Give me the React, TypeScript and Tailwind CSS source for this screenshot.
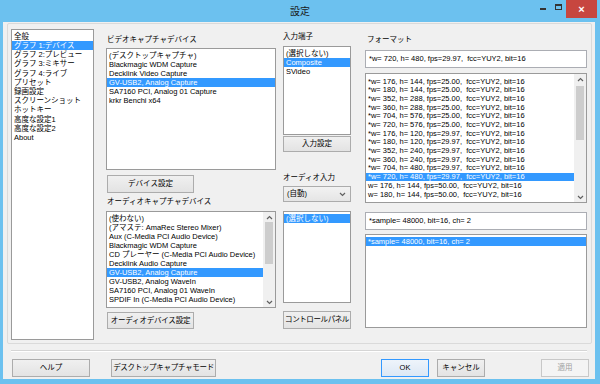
import React from "react";

const navItems = [
  "全般",
  "グラフ 1:デバイス",
  "グラフ 2:プレビュー",
  "グラフ 3:ミキサー",
  "グラフ 4:ライブ",
  "プリセット",
  "録画設定",
  "スクリーンショット",
  "ホットキー",
  "高度な設定1",
  "高度な設定2",
  "About",
];

const videoDevices = [
  "(デスクトップキャプチャ)",
  "Blackmagic WDM Capture",
  "Decklink Video Capture",
  "GV-USB2, Analog Capture",
  "SA7160 PCI, Analog 01 Capture",
  "krkr Benchi x64",
];

const audioDevices = [
  "(使わない)",
  "(アマステ: AmaRec Stereo Mixer)",
  "Aux (C-Media PCI Audio Device)",
  "Blackmagic WDM Capture",
  "CD プレーヤー (C-Media PCI Audio Device)",
  "Decklink Audio Capture",
  "GV-USB2, Analog Capture",
  "GV-USB2, Analog WaveIn",
  "SA7160 PCI, Analog 01 WaveIn",
  "SPDIF In (C-Media PCI Audio Device)",
];

const formats = [
  "*w= 176, h= 144, fps=25.00,  fcc=YUY2, bit=16",
  "*w= 180, h= 144, fps=25.00,  fcc=YUY2, bit=16",
  "*w= 352, h= 288, fps=25.00,  fcc=YUY2, bit=16",
  "*w= 360, h= 288, fps=25.00,  fcc=YUY2, bit=16",
  "*w= 704, h= 576, fps=25.00,  fcc=YUY2, bit=16",
  "*w= 720, h= 576, fps=25.00,  fcc=YUY2, bit=16",
  "*w= 176, h= 120, fps=29.97,  fcc=YUY2, bit=16",
  "*w= 180, h= 120, fps=29.97,  fcc=YUY2, bit=16",
  "*w= 352, h= 240, fps=29.97,  fcc=YUY2, bit=16",
  "*w= 360, h= 240, fps=29.97,  fcc=YUY2, bit=16",
  "*w= 704, h= 480, fps=29.97,  fcc=YUY2, bit=16",
  "*w= 720, h= 480, fps=29.97,  fcc=YUY2, bit=16",
  "w= 176, h= 144, fps=50.00,  fcc=YUY2, bit=16",
  "w= 180, h= 144, fps=50.00,  fcc=YUY2, bit=16",
];

function Chevron({ up }: { up?: boolean }) {
  return (
    <svg width="7" height="5" viewBox="0 0 7 5" className="text-[#606060]">
      <path d={up ? "M1 4 L3.5 1.5 L6 4" : "M1 1 L3.5 3.5 L6 1"} fill="none" stroke="currentColor" strokeWidth="1.2" />
    </svg>
  );
}

function Scrollbar({ thumbTop, thumbHeight }: { thumbTop: number; thumbHeight: number }) {
  return (
    <div className="w-[12px] h-full bg-[#f0f0f0] flex flex-col items-center">
      <div className="h-[10px] flex items-center justify-center"><Chevron up /></div>
      <div className="flex-1 w-full flex flex-col">
        <div style={{ height: thumbTop }} />
        <div className="mx-[2px] bg-[#cdcdcd]" style={{ height: thumbHeight }} />
      </div>
      <div className="h-[10px] flex items-center justify-center"><Chevron /></div>
    </div>
  );
}

function ListBox({
  items,
  selected,
  height,
  rowH,
  padTop,
  scroll,
}: {
  items: string[];
  selected: number;
  height: number;
  rowH: number;
  padTop: number;
  scroll?: { top: number; h: number };
}) {
  return (
    <div className="border border-[#9a9a9a] bg-white flex overflow-hidden" style={{ height }}>
      <div className="flex-1 flex flex-col overflow-hidden" style={{ paddingTop: padTop }}>
        {items.map((t, i) => (
          <div
            key={i}
            className={
              "pl-[2px] whitespace-pre shrink-0 flex items-center " +
              (i === selected ? "bg-[#3399ff] text-white" : "text-black")
            }
            style={{ height: rowH }}
          >
            {t}
          </div>
        ))}
      </div>
      {scroll && <Scrollbar thumbTop={scroll.top} thumbHeight={scroll.h} />}
    </div>
  );
}

function Button({ label, className = "" }: { label: string; className?: string }) {
  return (
    <div
      className={
        "border border-[#acacac] bg-gradient-to-b from-[#f0f0f0] to-[#e3e3e3] flex items-center justify-center text-black whitespace-nowrap overflow-hidden " +
        className
      }
    >
      {label}
    </div>
  );
}

function TextField({ value }: { value: string }) {
  return (
    <div className="h-[18px] border border-[#abadb3] bg-white flex items-center pl-[3px] whitespace-pre">{value}</div>
  );
}

export default function App() {
  return (
    <div className="w-[600px] h-[384px] bg-[#6cc1ef] flex flex-col font-['Liberation_Sans','Noto_Sans_CJK_JP',sans-serif] text-[7.5px] leading-none text-black overflow-hidden">
      {/* title bar */}
      <div className="h-[22px] grid grid-cols-[1fr_auto_1fr] items-center">
        <div />
        <div className="text-[10px] text-[#1a1a1a] pt-[1px]">設定</div>
        <div className="flex justify-end items-start h-full">
          <div className="w-[14px] h-[18px] flex items-center justify-center">
            <div className="w-[6px] h-[2px] bg-[#333]" />
          </div>
          <div className="w-[16px] h-[18px] flex items-start justify-center pt-[4px]">
            <div className="w-[7px] h-[6px] border border-[#333] border-t-2" />
          </div>
          <div className="w-[31px] h-[18px] bg-[#c7463f] mr-[3px] flex items-center justify-center text-white text-[11px] font-bold">
            ×
          </div>
        </div>
      </div>

      {/* dialog body */}
      <div className="flex-1 ml-[3px] mr-[5px] mb-[5px] bg-[#f0f0f0] flex flex-col">
        <div className="mt-[1px] ml-[4px] mr-[3px] h-[321px] border border-[#dadada] rounded-[2px] flex pl-[3px] pt-[5px] pr-[4px]">
          {/* left nav */}
          <div className="w-[83px] h-[311px] border border-[#9a9a9a] bg-white pt-[2px] flex flex-col">
            {navItems.map((t, i) => (
              <div
                key={t}
                className={"h-[9.2px] flex items-center pl-[2px] " + (i === 1 ? "bg-[#3399ff] text-white" : "")}
              >
                {t}
              </div>
            ))}
          </div>

          {/* video / audio devices */}
          <div className="w-[170px] ml-[12px] flex flex-col">
            <div className="mt-[7px] h-[9px] pl-[1px]">ビデオキャプチャデバイス</div>
            <div className="mt-[3px]">
              <ListBox items={videoDevices} selected={3} height={122} rowH={9} padTop={2} />
            </div>
            <Button label="デバイス設定" className="mt-[5px] h-[18px] w-[87px] ml-[1px]" />
            <div className="mt-[5px] h-[9px] pl-[1px]">オーディオキャプチャデバイス</div>
            <div className="mt-[4px]">
              <ListBox
                items={audioDevices}
                selected={6}
                height={97}
                rowH={9}
                padTop={2}
                scroll={{ top: 0, h: 42 }}
              />
            </div>
            <Button label="オーディオデバイス設定" className="mt-[4px] h-[17px] w-[87px] ml-[1px] tracking-[-0.2px]" />
          </div>

          {/* input terminal */}
          <div className="w-[68px] ml-[7px] flex flex-col">
            <div className="mt-[4px] h-[9px]">入力端子</div>
            <div className="mt-[4px]">
              <ListBox items={["(選択しない)", "Composite", "SVideo"]} selected={1} height={89} rowH={9} padTop={2} />
            </div>
            <Button label="入力設定" className="mt-[1px] h-[16px]" />
            <div className="mt-[22px] h-[9px]">オーディオ入力</div>
            <div className="mt-[3px] h-[16px] border border-[#acacac] bg-gradient-to-b from-[#f2f2f2] to-[#e5e5e5] flex items-center justify-between pl-[3px] pr-[4px]">
              <span>(自動)</span>
              <Chevron />
            </div>
            <div className="mt-[9px]">
              <ListBox items={["(選択しない)"]} selected={0} height={92} rowH={9} padTop={2} />
            </div>
            <Button label="コントロールパネル" className="mt-[8px] h-[18px] tracking-[-0.4px]" />
          </div>

          {/* format */}
          <div className="w-[222px] ml-[14px] flex flex-col">
            <div className="mt-[7px] h-[9px] pl-[2px]">フォーマット</div>
            <div className="mt-[5px]">
              <TextField value="*w= 720, h= 480, fps=29.97,  fcc=YUY2, bit=16" />
            </div>
            <div className="mt-[5px]">
              <ListBox items={formats} selected={11} height={130} rowH={8.7} padTop={3} scroll={{ top: 2, h: 54 }} />
            </div>
            <div className="mt-[9px]">
              <TextField value="*sample= 48000, bit=16, ch= 2" />
            </div>
            <div className="mt-[4px]">
              <ListBox items={["*sample= 48000, bit=16, ch= 2"]} selected={0} height={94} rowH={9} padTop={2} />
            </div>
          </div>
        </div>

        {/* separator */}
        <div className="mt-[6px] mx-[8px] h-[1px] bg-[#d5d5d5] border-b border-white box-content" />

        {/* bottom buttons */}
        <div className="mt-[7px] flex items-center pl-[9px] pr-[6px]">
          <Button label="ヘルプ" className="h-[18px] w-[78px]" />
          <Button label="デスクトップキャプチャモード" className="h-[18px] w-[105px] ml-[21px] tracking-[-0.3px]" />
          <div className="flex-1" />
          <div className="h-[18px] w-[48px] border border-[#3399ff] bg-gradient-to-b from-[#eef4fb] to-[#dde8f4] flex items-center justify-center">
            OK
          </div>
          <Button label="キャンセル" className="h-[18px] w-[48px] ml-[8px]" />
          <div className="h-[18px] w-[48px] ml-[56px] border border-[#c8c8c8] bg-[#f4f4f4] text-[#a0a0a0] flex items-center justify-center">
            適用
          </div>
        </div>
      </div>
    </div>
  );
}
